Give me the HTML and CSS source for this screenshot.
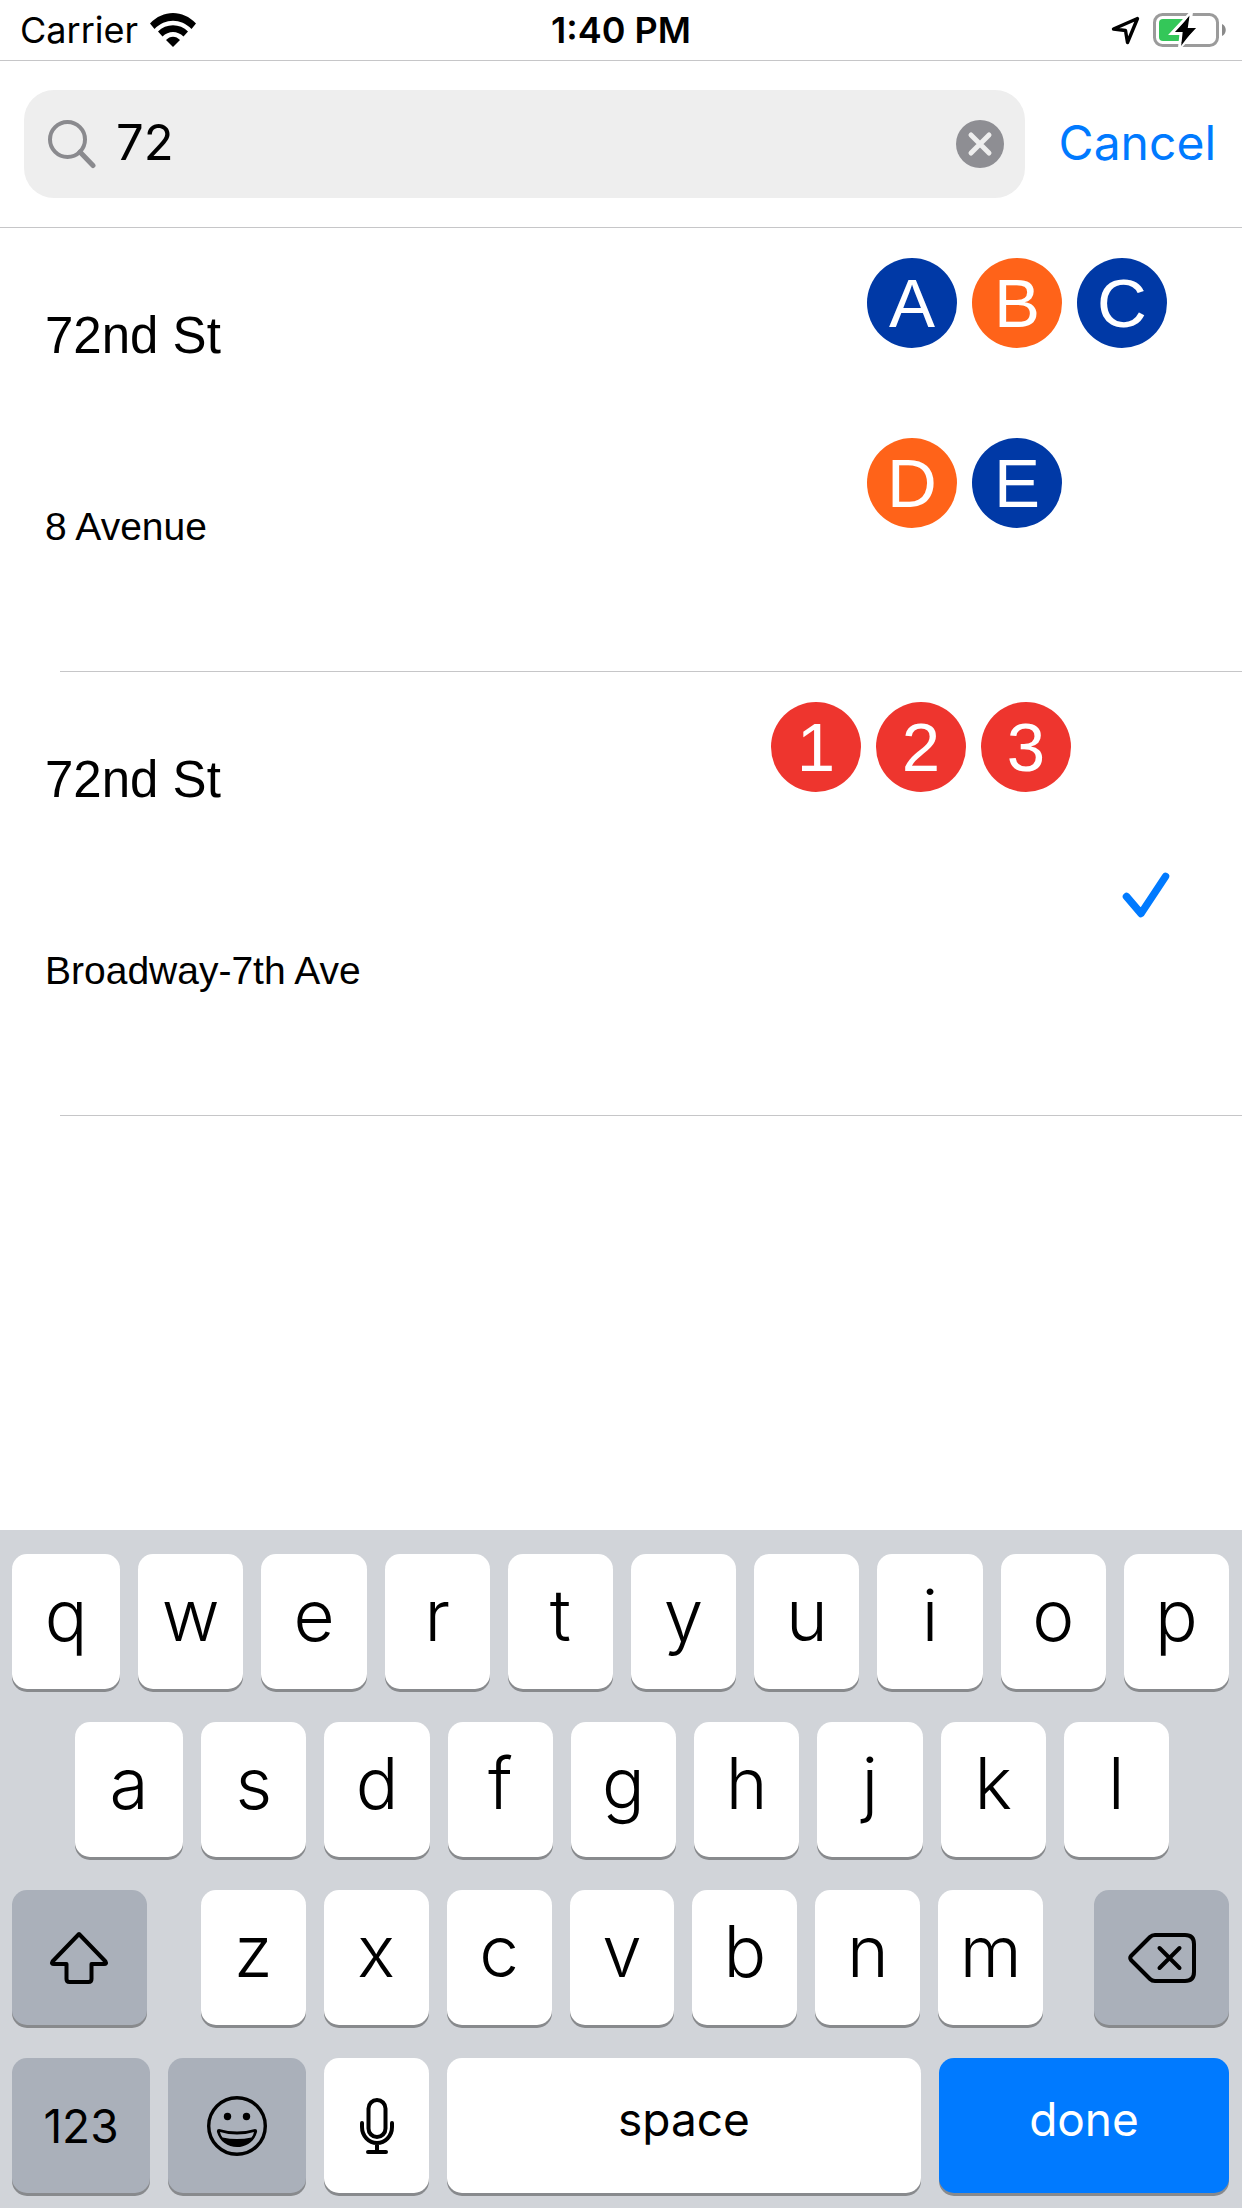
FILE: index.html
```html
<!DOCTYPE html>
<html lang="en">
<head>
<meta charset="utf-8">
<meta name="viewport" content="width=device-width, initial-scale=1">
<title>Station search</title>
<link rel="stylesheet" href="styles.css">
</head>
<body>
<div class="status-bar">
  <div class="status-left">
    <span>Carrier</span>
    <svg class="wifi" viewBox="0 0 46 34" width="46" height="34" aria-hidden="true">
      <path d="M0 10.500C13-3.500 33-3.500 46 10.500L41.500 16C31 5 15 5 4.500 16Z"/>
      <path d="M8 18.500C16 10 30 10 38 18.500L33.500 23.500C27.500 17.500 18.500 17.500 12.500 23.500Z"/>
      <path d="M16 27C20 22.500 26 22.500 30 27L23 34Z"/>
    </svg>
  </div>
  <time class="clock">1:40 PM</time>
  <div class="status-right">
    <svg viewBox="0 0 30 30" width="30" height="30" aria-hidden="true">
      <path d="M27.500 3.500L3.500 14L15.500 15.500L17.500 27.500Z" fill="none" stroke="#000" stroke-width="3.400" stroke-linejoin="round"/>
    </svg>
    <svg viewBox="0 0 74 36" width="74" height="36" aria-hidden="true">
      <rect x="2.500" y="2.500" width="63" height="31" rx="8" fill="none" stroke="#9b9b9b" stroke-width="3"/>
      <rect x="7" y="7" width="27" height="22" rx="4" fill="#34c759"/>
      <path d="M70 12C75 14 75 22 70 24Z" fill="#8a8a8a"/>
      <path d="M39.500 0L19.500 21.500H29L27.500 36L47.500 14.500H37.500Z" fill="#000" stroke="#fff" stroke-width="3"/>
      <path d="M37.500 3.500L24.500 20H32L29 34L42.500 16H34.500Z" fill="#000"/>
    </svg>
  </div>
</div>

<form class="search-bar" role="search">
  <div class="search-field">
    <svg viewBox="0 0 48 50" width="48" height="50" aria-hidden="true">
      <g fill="none" stroke="#8a8a8e" stroke-width="4">
        <circle cx="19.500" cy="20.500" r="17.500"/>
        <path d="M32 33L45 46.500" stroke-width="5" stroke-linecap="round"/>
      </g>
    </svg>
    <input class="search-input" type="text" value="72" aria-label="Search stations">
    <button class="clear" type="button" aria-label="Clear text">
      <svg viewBox="0 0 48 48" width="48" height="48" aria-hidden="true">
        <circle cx="24" cy="24" r="24" fill="#8e8e93"/>
        <path d="M15 15L33 33M33 15L15 33" stroke="#eee" stroke-width="5" stroke-linecap="round"/>
      </svg>
    </button>
  </div>
  <button class="cancel" type="button">Cancel</button>
</form>

<main class="results">
  <ul class="stations">
    <li class="station">
      <div class="station-text">
        <h2 class="station-name">72nd St</h2>
        <p class="station-line">8 Avenue</p>
      </div>
      <div class="routes">
        <span class="route blue">A</span>
        <span class="route orange">B</span>
        <span class="route blue">C</span>
        <span class="route orange">D</span>
        <span class="route blue">E</span>
      </div>
    </li>
    <li class="station">
      <div class="station-text">
        <h2 class="station-name">72nd St</h2>
        <p class="station-line">Broadway-7th Ave</p>
      </div>
      <div class="routes">
        <span class="route red">1</span>
        <span class="route red">2</span>
        <span class="route red">3</span>
      </div>
      <svg class="check" viewBox="0 0 48 48" width="48" height="48" role="img" aria-label="Selected">
        <path d="M7.500 26.500L22 43.500L46.500 6.500" fill="none" stroke="#007aff" stroke-width="7.500" stroke-linecap="round" stroke-linejoin="round"/>
      </svg>
    </li>
  </ul>
</main>

<div class="keyboard">
  <div class="key-row full">
    <button class="key">q</button><button class="key">w</button><button class="key">e</button><button class="key">r</button><button class="key">t</button><button class="key">y</button><button class="key">u</button><button class="key">i</button><button class="key">o</button><button class="key">p</button>
  </div>
  <div class="key-row full inset">
    <button class="key">a</button><button class="key">s</button><button class="key">d</button><button class="key">f</button><button class="key">g</button><button class="key">h</button><button class="key">j</button><button class="key">k</button><button class="key">l</button>
  </div>
  <div class="key-row spread">
    <button class="key dark side" aria-label="Shift">
      <svg viewBox="0 0 60 54" width="60" height="54" aria-hidden="true">
        <path d="M30 3L3.500 30.500Q2 33 5 33H17.500V48Q17.500 51 20.500 51H39.500Q42.500 51 42.500 48V33H55Q58 33 56.500 30.500Z" fill="none" stroke="#000" stroke-width="4" stroke-linejoin="round"/>
      </svg>
    </button>
    <div class="key-row letters">
      <button class="key">z</button><button class="key">x</button><button class="key">c</button><button class="key">v</button><button class="key">b</button><button class="key">n</button><button class="key">m</button>
    </div>
    <button class="key dark side" aria-label="Delete">
      <svg viewBox="0 0 68 52" width="68" height="52" aria-hidden="true">
        <g fill="none" stroke="#000" stroke-width="4" stroke-linecap="round" stroke-linejoin="round">
          <path d="M27 3H57Q66 3 66 12V40Q66 49 57 49H27Q24 49 22 47L3 28Q1.500 26 3 24L22 5Q24 3 27 3Z"/>
          <path d="M31.500 16L51.500 36M51.500 16L31.500 36"/>
        </g>
      </svg>
    </button>
  </div>
  <div class="key-row">
    <button class="key dark mode">123</button>
    <button class="key dark mode" aria-label="Emoji">
      <svg viewBox="0 0 60 60" width="60" height="60" aria-hidden="true">
        <circle cx="30" cy="30" r="28.300" fill="none" stroke="#000" stroke-width="3.400"/>
        <circle cx="20.500" cy="20.500" r="3.700"/>
        <circle cx="39.500" cy="20.500" r="3.700"/>
        <path d="M12 33Q30 38 48 33Q50.500 33 50 36C47.500 45.500 39 51 30 51C21 51 12.500 45.500 10 36Q9.500 33 12 33Z"/>
        <path d="M13 36Q30 41 47 36Q46.500 39 44.500 41.500Q30 44.500 15.500 41.500Q13.500 39 13 36Z" fill="#aab0ba"/>
      </svg>
    </button>
    <button class="key mic" aria-label="Dictate">
      <svg viewBox="0 0 36 58" width="36" height="58" aria-hidden="true">
        <g fill="none" stroke="#000" stroke-width="4" stroke-linecap="round">
          <rect x="9.500" y="3" width="17" height="37" rx="8.500"/>
          <path d="M3 26V30A15 16 0 0 0 33 30V26M18 46V54M9 55H27"/>
        </g>
      </svg>
    </button>
    <button class="key space">space</button>
    <button class="key done">done</button>
  </div>
</div>
</body>
</html>
```
FILE: styles.css
```css
* {
  box-sizing: border-box;
}

body {
  margin: 0;
  min-height: 100vh;
  display: flex;
  flex-direction: column;
  background: #fff;
  color: #000;
  font-family: Inter, "Liberation Sans", sans-serif;
}

button {
  border: 0;
  padding: 0;
  background: none;
  color: inherit;
  font-family: inherit;
}

svg {
  display: block;
  flex: none;
}

.status-bar {
  display: grid;
  grid-template-columns: 1fr auto 1fr;
  align-items: center;
  height: 61px;
  padding: 0 16px;
  border-bottom: 1px solid #c6c6c8;
  font-size: 36px;
  line-height: 60px;
}

.status-left,
.status-right {
  display: flex;
  align-items: center;
  gap: 12px;
}

.status-left {
  padding-left: 4px;
}

.status-right {
  justify-content: flex-end;
}

.clock {
  font-weight: 600;
}

.search-bar {
  display: flex;
  align-items: center;
  gap: 34px;
  margin: 0;
  padding: 29px 26px 29px 24px;
  border-bottom: 1px solid #c6c6c8;
}

.search-field {
  flex: 1;
  min-width: 0;
  display: flex;
  align-items: center;
  height: 108px;
  padding: 0 21px 0 24px;
  border-radius: 30px;
  background: #eee;
}

.search-input {
  flex: 1;
  min-width: 0;
  padding: 0 20px 2px;
  border: 0;
  outline: 0;
  background: none;
  font-family: inherit;
  font-size: 49px;
  line-height: 60px;
}

.cancel {
  padding-bottom: 2px;
  color: #007aff;
  font-size: 48px;
  line-height: 60px;
}

.results {
  flex: 1;
}

.stations {
  margin: 0;
  padding: 0;
  list-style: none;
  font-family: "Liberation Sans", sans-serif;
}

.station {
  display: flex;
  align-items: center;
  min-height: 444px;
  padding: 30px 75px 30px 45px;
  background: linear-gradient(#c6c6c8, #c6c6c8) 60px 100% / 100% 1px no-repeat;
}

.station-text {
  flex: 1;
  align-self: flex-start;
  padding-top: 48px;
}

.station-name {
  margin: 0 0 137px;
  font-size: 51px;
  font-weight: 400;
  line-height: 60px;
}

.station-line {
  margin: 0;
  font-size: 39px;
  line-height: 48px;
}

.routes {
  display: grid;
  grid-template-columns: repeat(3, 90px);
  gap: 90px 15px;
  align-self: flex-start;
}

.route {
  height: 90px;
  border-radius: 50%;
  color: #fff;
  font-size: 69px;
  line-height: 92px;
  text-align: center;
}

.blue {
  background: #0039a6;
}

.orange {
  background: #ff6319;
}

.red {
  background: #ee352e;
}

.check {
  margin-left: 48px;
  overflow: visible;
}

.keyboard {
  display: flex;
  flex-direction: column;
  gap: 33px;
  padding: 24px 13px 15px 12px;
  background: #d1d4d9;
}

.key-row {
  display: flex;
  gap: 18px;
}

.inset {
  padding: 0 60px 0 63px;
}

.spread {
  gap: 51px;
}

.letters {
  flex: 843 1 0;
  padding-left: 3px;
}

.key {
  flex: 105 1 0;
  min-width: 0;
  display: flex;
  align-items: center;
  justify-content: center;
  height: 135px;
  padding-bottom: 14px;
  border-radius: 15px;
  background: #fff;
  box-shadow: 0 3px 0 #888a8d;
  font-size: 71px;
  font-weight: 350;
  line-height: 84px;
}

.full .key:first-child {
  flex-grow: 108;
}

.dark {
  background: #aab0ba;
}

.side {
  flex-grow: 135;
}

.mode {
  flex-grow: 138;
}

.space {
  flex-grow: 474;
}

.done {
  flex-grow: 290;
  background: #007aff;
  color: #fff;
}

.mode,
.space,
.done {
  font-size: 46px;
  font-weight: 400;
  line-height: 60px;
}

.side,
.mode,
.mic {
  padding-bottom: 0;
}
```
